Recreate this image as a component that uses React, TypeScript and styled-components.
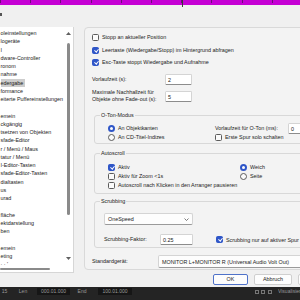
import React from "react";
import styled, { createGlobalStyle } from "styled-components";

const GlobalStyle = createGlobalStyle`
  html, body {
    margin: 0;
    padding: 0;
  }
  body {
    width: 300px;
    height: 300px;
    overflow: hidden;
    background: #f0f0f0;
    font-family: "Liberation Sans", Arial, sans-serif;
    font-size: 5.4px;
    color: #1b1b1b;
  }
  * {
    box-sizing: border-box;
  }
`;

const treeItems = [
  "oleinstellungen",
  "logeräte",
  "I",
  "dware-Controller",
  "ronom",
  "nahme",
  "edergabe",
  "formance",
  "eiterte Puffereinstellungen",
  "",
  "emein",
  "ckgängig",
  "tsetzen von Objekten",
  "sfade-Editor",
  "r / Menü / Maus",
  "tatur / Menü",
  "I-Editor-Tasten",
  "sfade-Editor-Tasten",
  "dialtasten",
  "us",
  "urad",
  "",
  "fläche",
  "ektdarstellung",
  "ben",
  "",
  "emein",
  "eting",
  "· ·  ' .",
];

const SELECTED = 6;

const App: React.FC = () => {
  return (
    <Page>
      <GlobalStyle />
      <Ruler>
        <Cursor />
      </Ruler>
      <Toolbar>
        <Mark />
      </Toolbar>
      <Body>
        <Tree>
          <TreeRows>
            {treeItems.map((t, i) => (
              <TreeRow key={i}>
                <TreeLabel $selected={i === SELECTED}>{t}</TreeLabel>
              </TreeRow>
            ))}
          </TreeRows>
          <VScroll>
            <Arrow viewBox="0 0 5 3">
              <path d="M0 3 L2.5 0 L5 3 Z" />
            </Arrow>
            <Thumb />
            <Spacer />
            <Arrow viewBox="0 0 5 3">
              <path d="M0 0 L2.5 3 L5 0 Z" />
            </Arrow>
          </VScroll>
          <HScroll>
            <HThumb />
          </HScroll>
        </Tree>

        <Panel>
          <CheckRow style={{ marginTop: 4.5 }}>
            <Check />
            <span>Stopp an aktueller Position</span>
          </CheckRow>
          <CheckRow style={{ marginTop: 4 }}>
            <Check $checked />
            <span>Leertaste (Wiedergabe/Stopp) im Hintergrund abfragen</span>
          </CheckRow>
          <CheckRow style={{ marginTop: 3 }}>
            <Check $checked />
            <span>Esc-Taste stoppt Wiedergabe und Aufnahme</span>
          </CheckRow>

          <FieldRow $top={7}>
            <FieldLabel $w={73}>Vorlaufzeit (s):</FieldLabel>
            <Input $w={27}>2</Input>
          </FieldRow>
          <FieldRow $top={4.5}>
            <FieldLabel $w={73}>
              Maximale Nachhallzeit für
              <br />
              Objekte ohne Fade-out (s):
            </FieldLabel>
            <Input $w={27}>5</Input>
          </FieldRow>

          <Group $top={8.5}>
            <Legend>O-Ton-Modus</Legend>
            <GroupBody $pad="5px 0 1.5px 13px">
              <TwoCol $first={107}>
                <CheckRow>
                  <Radio $checked />
                  <span>An Objektkanten</span>
                </CheckRow>
                <FieldRow $top={0}>
                  <FieldLabel $w={73}>Vorlaufzeit für O-Ton (ms):</FieldLabel>
                  <Input $w={30}>0</Input>
                </FieldRow>
                <CheckRow>
                  <Radio />
                  <span>An CD-Titel-Indizes</span>
                </CheckRow>
                <CheckRow>
                  <Check />
                  <span>Erste Spur solo schalten</span>
                </CheckRow>
              </TwoCol>
            </GroupBody>
          </Group>

          <Group $top={5.5}>
            <Legend>Autoscroll</Legend>
            <GroupBody $pad="6px 0 3.5px 13px">
              <TwoCol $first={132}>
                <CheckRow>
                  <Check $checked />
                  <span>Aktiv</span>
                </CheckRow>
                <CheckRow>
                  <Radio $checked />
                  <span>Weich</span>
                </CheckRow>
                <CheckRow>
                  <Check />
                  <span>Aktiv für Zoom &lt;1s</span>
                </CheckRow>
                <CheckRow>
                  <Radio />
                  <span>Seite</span>
                </CheckRow>
                <CheckRow>
                  <Check />
                  <span>Autoscroll nach Klicken in den Arranger pausieren</span>
                </CheckRow>
              </TwoCol>
            </GroupBody>
          </Group>

          <Group $top={3.5}>
            <Legend>Scrubbing</Legend>
            <GroupBody $pad="8.5px 0 2px 9px">
              <Select $w={89}>
                <span>OneSpeed</span>
                <svg width="5" height="3" viewBox="0 0 5 3">
                  <path d="M0.5 0.5 L2.5 2.5 L4.5 0.5" fill="none" stroke="#444" strokeWidth="0.7" />
                </svg>
              </Select>
              <FieldRow $top={9}>
                <FieldLabel $w={56}>Scrubbing-Faktor:</FieldLabel>
                <Input $w={33}>0.25</Input>
                <CheckRow style={{ marginLeft: 23 }}>
                  <Check $checked />
                  <span>Scrubbing nur auf aktiver Spur</span>
                </CheckRow>
              </FieldRow>
            </GroupBody>
          </Group>

          <FieldRow $top={6.5}>
            <FieldLabel $w={66}>Standardgerät:</FieldLabel>
            <DeviceField>MONITOR L+MONITOR R (Universal Audio Volt Out)</DeviceField>
          </FieldRow>
        </Panel>
      </Body>

      <ButtonRow>
        <Button $primary>OK</Button>
        <Button>Abbruch</Button>
        <Button>Anwenden</Button>
      </ButtonRow>

      <Transport>
        <TField $w={9}>15</TField>
        <TField $w={12} $ml={8}>Len</TField>
        <TField $w={33} $ml={8} $dark>000.01.000</TField>
        <TField $w={16} $ml={4}>End</TField>
        <TField $w={34} $ml={8} $dark>100.01.000</TField>
        <Spacer />
        <TIcon />
        <TIcon />
        <TIcon $ml={3} />
        <TField $w={22} $ml={6}>Visualisierung</TField>
      </Transport>
    </Page>
  );
};

export default App;

const Page = styled.div`
  width: 300px;
  height: 300px;
  overflow: hidden;
  display: flex;
  flex-direction: column;
  background: #f0f0f0;
`;

const Ruler = styled.div`
  position: relative;
  flex: 0 0 5px;
  background:
    repeating-linear-gradient(90deg, #6e0a7a 0 1px, transparent 1px 30.2px) 0 0 / 100% 3px no-repeat,
    #c500d4;
`;

const Cursor = styled.div`
  position: absolute;
  left: 182px;
  top: 0;
  width: 1px;
  height: 7px;
  background: #3a3a3a;
`;

const Toolbar = styled.div`
  flex: 0 0 22px;
  display: flex;
  align-items: flex-start;
`;

const Mark = styled.div`
  width: 1.5px;
  height: 3px;
  margin-top: 8px;
  background: #555;
`;

const Body = styled.div`
  flex: 0 0 246px;
  display: flex;
  align-items: flex-start;
  gap: 10px;
`;

const Tree = styled.div`
  flex: 0 0 74px;
  height: 246px;
  background: #fff;
  border-right: 1px solid #d6d6d6;
  border-bottom: 1px solid #d6d6d6;
  display: grid;
  grid-template-columns: 1fr 9px;
  grid-template-rows: 1fr 7px;
`;

const TreeRows = styled.div`
  overflow: hidden;
  padding-top: 2px;
`;

const TreeRow = styled.div`
  height: 8.25px;
  line-height: 8.25px;
  white-space: nowrap;
  padding-left: 0.5px;
`;

const TreeLabel = styled.span<{ $selected?: boolean }>`
  display: inline-block;
  padding-right: 2px;
  background: ${(p) => (p.$selected ? "#cdcdcd" : "transparent")};
`;

const VScroll = styled.div`
  display: flex;
  flex-direction: column;
  align-items: center;
  padding: 4.5px 0 5px;
`;

const Arrow = styled.svg`
  width: 5px;
  height: 3px;
  fill: #606060;
`;

const Thumb = styled.div`
  width: 3.5px;
  height: 172px;
  margin-top: 8.5px;
  border-radius: 2px;
  background: #8a8a8a;
`;

const Spacer = styled.div`
  flex: 1;
`;

const HScroll = styled.div`
  display: flex;
  align-items: center;
`;

const HThumb = styled.div`
  width: 50px;
  height: 2px;
  border-radius: 1px;
  background: #8a8a8a;
`;

const Panel = styled.div`
  flex: 0 0 260px;
  height: 243px;
  border: 1px solid #d9d9d9;
  border-radius: 4px;
  background: #f3f3f3;
  padding-left: 7px;
  display: flex;
  flex-direction: column;
`;

const CheckRow = styled.div`
  display: flex;
  align-items: center;
  gap: 3px;
  height: 9px;
  white-space: nowrap;
`;

const Check = styled.span<{ $checked?: boolean }>`
  position: relative;
  flex: 0 0 7px;
  height: 7px;
  border-radius: 1.5px;
  border: 1px solid ${(p) => (p.$checked ? "#2f56c8" : "#5c5c5c")};
  background: ${(p) => (p.$checked ? "#2f56c8" : "#fbfbfb")};

  &::after {
    content: "";
    display: ${(p) => (p.$checked ? "block" : "none")};
    position: absolute;
    left: 1.6px;
    top: 0.4px;
    width: 1.6px;
    height: 3.2px;
    border: solid #fff;
    border-width: 0 0.8px 0.8px 0;
    transform: rotate(40deg);
  }
`;

const Radio = styled.span<{ $checked?: boolean }>`
  flex: 0 0 7px;
  height: 7px;
  border-radius: 50%;
  border: ${(p) => (p.$checked ? "2px solid #2f56c8" : "1px solid #5c5c5c")};
  background: #fbfbfb;
`;

const FieldRow = styled.div<{ $top: number }>`
  display: flex;
  align-items: center;
  margin-top: ${(p) => p.$top}px;
  white-space: nowrap;
`;

const FieldLabel = styled.span<{ $w: number }>`
  flex: 0 0 ${(p) => p.$w}px;
  line-height: 7px;
`;

const Input = styled.div<{ $w: number }>`
  flex: 0 0 ${(p) => p.$w}px;
  height: 11px;
  line-height: 10px;
  padding-left: 2px;
  background: #fff;
  border: 1px solid #d4d4d4;
  border-bottom-color: #8c8c8c;
  border-radius: 1.5px;
`;

const Group = styled.fieldset<{ $top: number }>`
  margin: ${(p) => p.$top}px 10px 0 2px;
  padding: 0;
  border: 1px solid #d8d8d8;
  border-radius: 3px;
  min-width: 0;
`;

const Legend = styled.legend`
  margin-left: 5px;
  padding: 0 1px;
  line-height: 7px;
  font-size: 5.4px;
`;

const GroupBody = styled.div<{ $pad: string }>`
  padding: ${(p) => p.$pad};
`;

const TwoCol = styled.div<{ $first: number }>`
  display: grid;
  grid-template-columns: ${(p) => p.$first}px auto;
  grid-auto-rows: 9px;
  align-items: center;
`;

const Select = styled.div<{ $w: number }>`
  width: ${(p) => p.$w}px;
  height: 12px;
  padding: 0 3px;
  display: flex;
  align-items: center;
  justify-content: space-between;
  background: #fdfdfd;
  border: 1px solid #d4d4d4;
  border-bottom-color: #9a9a9a;
  border-radius: 2px;
`;

const DeviceField = styled.div`
  flex: 0 0 200px;
  height: 13.5px;
  line-height: 12px;
  padding-left: 3px;
  background: #fdfdfd;
  border: 1px solid #d4d4d4;
  border-bottom-color: #9a9a9a;
  border-radius: 2px;
`;

const ButtonRow = styled.div`
  flex: 0 0 11px;
  margin-top: 1px;
  padding-left: 213px;
  display: flex;
  gap: 6px;
`;

const Button = styled.div<{ $primary?: boolean }>`
  flex: 0 0 ${(p) => (p.$primary ? 35 : 38)}px;
  height: 11px;
  line-height: 9px;
  text-align: center;
  background: #fdfdfd;
  border: 1px solid ${(p) => (p.$primary ? "#4f72c9" : "#cfcfcf")};
  border-radius: 2px;
`;

const Transport = styled.div`
  flex: 0 0 13px;
  margin-top: 2px;
  display: flex;
  align-items: flex-start;
  padding-top: 1px;
  background: #242424;
  color: #9a9a9a;
  font-size: 5px;
`;

const TField = styled.span<{ $w: number; $ml?: number; $dark?: boolean }>`
  flex: 0 0 ${(p) => p.$w}px;
  margin-left: ${(p) => p.$ml ?? 0}px;
  height: 7px;
  line-height: 7px;
  text-align: center;
  overflow: hidden;
  white-space: nowrap;
  background: ${(p) => (p.$dark ? "#161616" : "transparent")};
`;

const TIcon = styled.span<{ $ml?: number }>`
  flex: 0 0 4px;
  height: 4px;
  margin: 1.5px 0 0 ${(p) => p.$ml ?? 2}px;
  border: 1px solid #777;
`;
